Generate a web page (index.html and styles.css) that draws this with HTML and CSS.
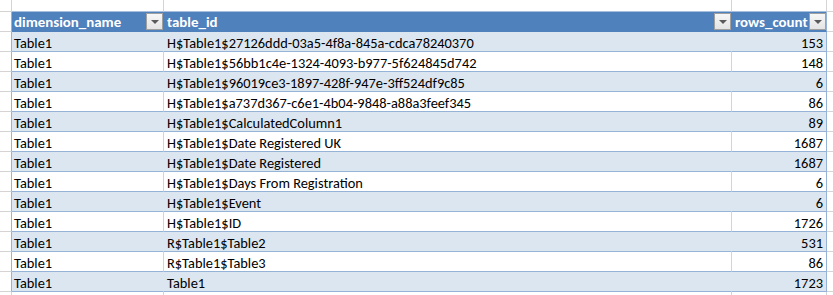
FILE: index.html
```html
<!DOCTYPE html>
<html>
<head>
<meta charset="utf-8">
<link rel="stylesheet" href="styles.css">
</head>
<body>
<div class="sheet">
  <div class="row top">
    <div class="gut"></div><div class="c a"></div><div class="c b"></div><div class="c n"></div><div class="tail"></div>
  </div>
  <div class="row head">
    <div class="gut"></div>
    <div class="c a"><span class="lbl">dimension_name</span><span class="dd"></span></div>
    <div class="c b"><span class="lbl">table_id</span><span class="dd"></span></div>
    <div class="c n"><span class="lbl">rows_count</span><span class="dd"></span></div>
    <div class="tail"></div>
  </div>
  <div class="row band"><div class="gut"></div><div class="c a">Table1</div><div class="c b">H$Table1$27126ddd-03a5-4f8a-845a-cdca78240370</div><div class="c n">153</div><div class="tail"></div></div>
  <div class="row"><div class="gut"></div><div class="c a">Table1</div><div class="c b">H$Table1$56bb1c4e-1324-4093-b977-5f624845d742</div><div class="c n">148</div><div class="tail"></div></div>
  <div class="row band"><div class="gut"></div><div class="c a">Table1</div><div class="c b">H$Table1$96019ce3-1897-428f-947e-3ff524df9c85</div><div class="c n">6</div><div class="tail"></div></div>
  <div class="row"><div class="gut"></div><div class="c a">Table1</div><div class="c b">H$Table1$a737d367-c6e1-4b04-9848-a88a3feef345</div><div class="c n">86</div><div class="tail"></div></div>
  <div class="row band"><div class="gut"></div><div class="c a">Table1</div><div class="c b">H$Table1$CalculatedColumn1</div><div class="c n">89</div><div class="tail"></div></div>
  <div class="row"><div class="gut"></div><div class="c a">Table1</div><div class="c b">H$Table1$Date Registered UK</div><div class="c n">1687</div><div class="tail"></div></div>
  <div class="row band"><div class="gut"></div><div class="c a">Table1</div><div class="c b">H$Table1$Date Registered</div><div class="c n">1687</div><div class="tail"></div></div>
  <div class="row"><div class="gut"></div><div class="c a">Table1</div><div class="c b">H$Table1$Days From Registration</div><div class="c n">6</div><div class="tail"></div></div>
  <div class="row band"><div class="gut"></div><div class="c a">Table1</div><div class="c b">H$Table1$Event</div><div class="c n">6</div><div class="tail"></div></div>
  <div class="row"><div class="gut"></div><div class="c a">Table1</div><div class="c b">H$Table1$ID</div><div class="c n">1726</div><div class="tail"></div></div>
  <div class="row band"><div class="gut"></div><div class="c a">Table1</div><div class="c b">R$Table1$Table2</div><div class="c n">531</div><div class="tail"></div></div>
  <div class="row"><div class="gut"></div><div class="c a">Table1</div><div class="c b">R$Table1$Table3</div><div class="c n">86</div><div class="tail"></div></div>
  <div class="row band"><div class="gut"></div><div class="c a">Table1</div><div class="c b">Table1</div><div class="c n">1723</div><div class="tail"></div></div>
  <div class="row after"><div class="gut"></div><div class="c a"></div><div class="c b"></div><div class="c n"></div><div class="tail"></div></div>
</div>
</body>
</html>
```
FILE: styles.css
```css
html, body {
  margin: 0;
  padding: 0;
  background: #ffffff;
}
body {
  font-family: Carlito, Calibri, Lato, "Open Sans", sans-serif;
  font-size: 14.4px;
  color: #000000;
  width: 833px;
  height: 295px;
  overflow: hidden;
}
.sheet {
  display: flex;
  flex-direction: column;
}
.row {
  display: grid;
  grid-template-columns: 12px 152px 568px 95px 1fr;
  height: 20px;
}
.row > div {
  box-sizing: border-box;
  border-right: 1px solid #d4d4d4;
  border-bottom: 1px solid #95b3d7;
  white-space: nowrap;
  overflow: hidden;
  padding-top: 2px;
  line-height: 19px;
}
.row > .gut,
.row > .tail {
  border-bottom-color: #d4d4d4;
}
.row > .gut {
  border-right-color: #95b3d7;
}
.row > .tail {
  border-right: none;
}
.row > .n {
  border-right-color: #95b3d7;
  text-align: right;
  padding-right: 3px;
}
.c.a { padding-left: 2px; }
.c.b { padding-left: 3px; }

.top { height: 12px; }
.top > div { border-right-color: #d4d4d4; padding-top: 0; }
.top > .gut { border-right-color: #d4d4d4; }
.top > .n { border-right-color: #d4d4d4; }
.top > .c { border-bottom-color: #a7bfdd; }

.after { height: 3px; }
.after > div { border-bottom: none; padding-top: 0; }
.after > .gut,
.after > .c { border-right-color: #d4d4d4; }

.head > .c {
  background: #4f81bd;
  border-right-color: #4f81bd;
  border-bottom-color: #4f81bd;
  color: #ffffff;
  font-weight: bold;
  font-size: 14.9px;
  display: flex;
  align-items: center;
  justify-content: space-between;
  padding-top: 0;
  padding-right: 0;
}
.head > .n { border-right-color: #95b3d7; }
.head > .c.n { padding-left: 3px; }
.head .lbl { line-height: 20px; padding-top: 1px; }

.dd {
  box-sizing: border-box;
  width: 17px;
  height: 17px;
  border: 1px solid #a0a0a0;
  background: linear-gradient(#f7f7f7, #e4e4e4);
  display: flex;
  align-items: center;
  justify-content: center;
  flex: none;
}
.dd::after {
  content: "";
  width: 0;
  height: 0;
  border-left: 4px solid transparent;
  border-right: 4px solid transparent;
  border-top: 4px solid #5a5a5a;
  margin-top: 1px;
}

.band > .c {
  background: #dce6f1;
  border-right-color: #dce6f1;
}
.band > .c.n {
  border-right-color: #95b3d7;
}
```
